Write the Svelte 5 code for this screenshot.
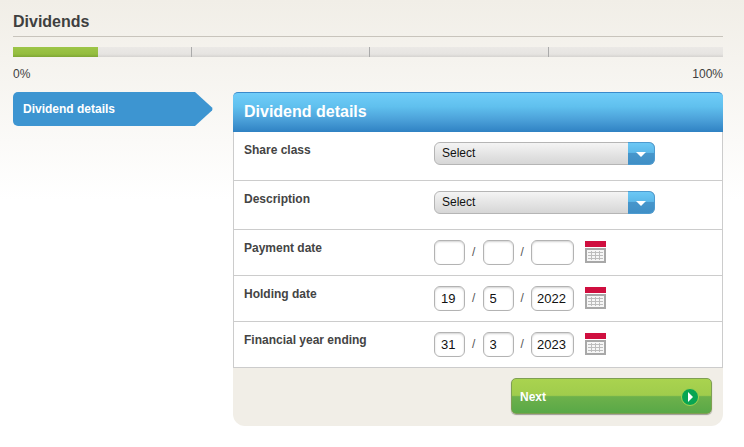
<script>
  const rows = [
    { label: 'Share class', type: 'select' },
    { label: 'Description', type: 'select' },
    { label: 'Payment date', type: 'date', d: '', m: '', y: '' },
    { label: 'Holding date', type: 'date', d: '19', m: '5', y: '2022' },
    { label: 'Financial year ending', type: 'date', d: '31', m: '3', y: '2023' }
  ];
</script>

<main class="page">
  <h1>Dividends</h1>

  <div class="progress">
    <div class="fill"></div>
    <span class="seg wide"></span>
    <span class="seg"></span>
    <span class="seg wide"></span>
    <span class="seg last"></span>
  </div>
  <div class="scale">
    <span>0%</span>
    <span>100%</span>
  </div>

  <div class="content">
    <nav class="side">
      <div class="step">Dividend details</div>
      <svg class="step-tip" width="19" height="34" viewBox="0 0 19 34">
        <path d="M0 0 H1 L18 15.5 Q19 17 18 18.5 L1 34 H0 Z" fill="#3d95d1" />
      </svg>
    </nav>

    <section class="panel">
      <h2>Dividend details</h2>
      <div class="rows">
        {#each rows as row}
          <div class="row" class:tall={row.type === 'select'}>
            <label for={row.label}>{row.label}</label>
            {#if row.type === 'select'}
              <div class="select" id={row.label}>
                <span class="select-text">Select</span>
                <span class="select-btn">
                  <svg width="10" height="5" viewBox="0 0 10 5"><path d="M0 0 H10 L5 5 Z" fill="#fff" /></svg>
                </span>
              </div>
            {:else}
              <div class="date" id={row.label}>
                <input class="small" value={row.d} />
                <span class="slash">/</span>
                <input class="small" value={row.m} />
                <span class="slash">/</span>
                <input class="year" value={row.y} />
                <svg class="cal" width="21" height="22" viewBox="0 0 21 22">
                  <rect width="21" height="6" fill="#cf0f3f" />
                  <rect x="1" y="8" width="19" height="13" fill="#f6f6f6" stroke="#a8a8a8" stroke-width="2" />
                  <path d="M3 11.5 H18 M3 14.5 H18 M3 17.5 H18 M6.5 10 V19 M10.5 10 V19 M14.5 10 V19" stroke="#bdbdbd" fill="none" />
                </svg>
              </div>
            {/if}
          </div>
        {/each}
      </div>
      <div class="footer">
        <button class="next">
          <span>Next</span>
          <span class="go">
            <svg width="7" height="10" viewBox="0 0 7 10"><path d="M1 0 L6 5 L1 10 Z" fill="#fff" /></svg>
          </span>
        </button>
      </div>
    </section>
  </div>
</main>

<style>
  :global(body) {
    font-family: "Liberation Sans", Arial, sans-serif;
    background: #fff;
  }

  .page {
    height: 447px;
    box-sizing: border-box;
    padding: 12px 21px 0 13px;
    background: linear-gradient(#f1eee7, #fff 200px);
    color: #3f3f3f;
    overflow: hidden;
  }

  h1 {
    margin: 0;
    height: 24px;
    line-height: 19px;
    font-size: 16px;
    font-weight: bold;
    color: #3f3f3f;
    border-bottom: 1px solid #c8c4bc;
  }

  .progress {
    position: relative;
    display: flex;
    height: 10px;
    margin-top: 10px;
    background: linear-gradient(#ebe9e6, #e6e4e1 70%, #d5d3d0);
  }

  .fill {
    position: absolute;
    left: 0;
    top: 0;
    bottom: 0;
    width: 85px;
    background: linear-gradient(#9dc548, #94bd3e 70%, #7fa635);
  }

  .seg {
    width: 178px;
    box-sizing: border-box;
    border-right: 1px solid #aaa;
  }

  .seg.wide {
    width: 179px;
  }

  .seg.last {
    flex: 1;
    border-right: none;
  }

  .scale {
    display: flex;
    justify-content: space-between;
    margin-top: 10px;
    height: 25px;
    font-size: 12px;
    line-height: 14px;
  }

  .content {
    display: flex;
    gap: 20px;
    align-items: flex-start;
  }

  .side {
    display: flex;
    width: 200px;
    flex-shrink: 0;
  }

  .step {
    flex: 1;
    height: 34px;
    padding-left: 10px;
    line-height: 35px;
    font-size: 12px;
    font-weight: bold;
    color: #fff;
    background: #3d95d1;
    border-radius: 5px 0 0 5px;
  }

  .step-tip {
    flex-shrink: 0;
  }

  .panel {
    flex: 1;
  }

  h2 {
    margin: 0;
    height: 40px;
    box-sizing: border-box;
    padding-left: 11px;
    line-height: 38px;
    font-size: 16px;
    font-weight: bold;
    color: #fff;
    border-top: 1px solid #3a8acb;
    border-radius: 5px 5px 0 0;
    background: linear-gradient(#70cdf9, #60c0ee 35%, #4a9fd8 70%, #2f82c3);
  }

  .rows {
    background: #fff;
    border-left: 1px solid #ccc;
    border-right: 1px solid #ccc;
  }

  .row {
    display: flex;
    height: 46px;
    box-sizing: border-box;
    border-bottom: 1px solid #ccc;
  }

  .row.tall {
    height: 49px;
  }

  label {
    width: 190px;
    padding: 11px 0 0 10px;
    font-size: 12px;
    line-height: 14px;
    font-weight: bold;
    color: #444;
  }

  .select {
    display: flex;
    width: 221px;
    height: 23px;
    margin-top: 10px;
    box-sizing: border-box;
    border: 1px solid #b5b5b5;
    border-radius: 6px;
    background: linear-gradient(#f4f4f4, #d6d6d6);
    position: relative;
  }

  .select-text {
    flex: 1;
    padding-left: 7px;
    font-size: 12px;
    line-height: 21px;
    color: #111;
  }

  .select-btn {
    display: flex;
    align-items: center;
    justify-content: center;
    width: 27px;
    margin: -1px;
    padding-top: 2px;
    box-sizing: border-box;
    border: 1px solid #4d9bd0;
    border-left: none;
    border-radius: 0 6px 6px 0;
    background: linear-gradient(#6cc8f5, #5cb8e9 45%, #4796cb 50%, #3f8fc6);
  }

  .date {
    display: flex;
    align-items: flex-start;
    padding-top: 10px;
  }

  input {
    height: 25px;
    box-sizing: border-box;
    padding: 0 0 0 6px;
    border: 1px solid #b3b3b3;
    border-radius: 6px;
    background: #fff;
    box-shadow: inset 0 1px 2px rgba(0, 0, 0, 0.18);
    font-family: inherit;
    font-size: 13px;
    color: #111;
  }

  .small {
    width: 31px;
  }

  .year {
    width: 43px;
    padding-left: 5px;
  }

  .slash {
    width: 17.5px;
    text-align: center;
    font-size: 12px;
    line-height: 25px;
    color: #555;
  }

  .cal {
    margin: 1px 0 0 11px;
  }

  .footer {
    display: flex;
    justify-content: flex-end;
    height: 58px;
    box-sizing: border-box;
    padding: 10px 11px 0 0;
    background: #f1eee7;
    border-radius: 0 0 12px 12px;
  }

  .next {
    display: flex;
    align-items: center;
    justify-content: space-between;
    width: 201px;
    height: 36px;
    padding: 2px 12px 0 8px;
    border: 1px solid #7f9f52;
    border-radius: 5px;
    background: linear-gradient(#a9d34f, #a0cc4c 48%, #6db14b 52%, #59a847);
    box-shadow: 0 1px 1px rgba(0, 0, 0, 0.35);
    font-family: inherit;
    font-size: 12px;
    font-weight: bold;
    color: #fff;
  }

  .go {
    display: flex;
    align-items: center;
    justify-content: center;
    width: 18px;
    height: 18px;
    box-sizing: border-box;
    border: 1px solid #a5d24f;
    border-radius: 50%;
    background: #08a552;
  }
</style>
